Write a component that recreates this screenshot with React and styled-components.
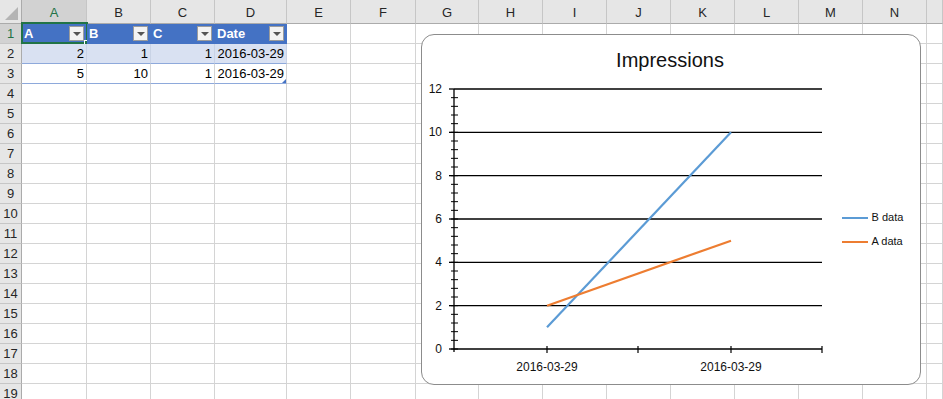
import React from 'react';
import styled, {createGlobalStyle, css} from 'styled-components';

const GlobalStyle = createGlobalStyle`
  html, body {
    margin: 0;
    padding: 0;
    background: #fff;
    overflow: hidden;
  }
  body {
    font-family: "Liberation Sans", Arial, sans-serif;
  }
`;

// last column (O) only peeks in at the right edge, its letter is off screen
const columns = [
  {l: 'A', w: 65}, {l: 'B', w: 64}, {l: 'C', w: 64}, {l: 'D', w: 72},
  {l: 'E', w: 64}, {l: 'F', w: 65}, {l: 'G', w: 63}, {l: 'H', w: 64},
  {l: 'I', w: 64}, {l: 'J', w: 64}, {l: 'K', w: 64}, {l: 'L', w: 64},
  {l: 'M', w: 64}, {l: 'N', w: 64}, {l: '', w: 16},
];

const tableHead = ['A', 'B', 'C', 'Date'];
const tableRows = [
  ['2', '1', '1', '2016-03-29'],
  ['5', '10', '1', '2016-03-29'],
];

const ROWS = 19;

const Sheet = styled.div`
  position: relative;
  width: 943px;
  height: 399px;
  overflow: hidden;
`;

const Grid = styled.div`
  display: grid;
  grid-template-columns: 22px ${columns.map(c => c.w + 'px').join(' ')};
  grid-template-rows: 24px repeat(${ROWS}, 20px);
  font-size: 13px;
  color: #000;
`;

const Corner = styled.div`
  position: relative;
  background: #e6e6e6;
  border-right: 1px solid #ababab;
  border-bottom: 1px solid #ababab;
  box-sizing: border-box;
  &::after {
    content: '';
    position: absolute;
    right: 3px;
    bottom: 3px;
    width: 0;
    height: 0;
    border-left: 13px solid transparent;
    border-bottom: 13px solid #b4b4b4;
  }
`;

const ColHead = styled.div`
  display: flex;
  align-items: center;
  justify-content: center;
  box-sizing: border-box;
  background: ${p => (p.$active ? '#d2d2d2' : '#e6e6e6')};
  color: ${p => (p.$active ? '#217346' : '#262626')};
  border-right: 1px solid #c6c6c6;
  border-bottom: 1px solid #ababab;
  padding-top: 1px;
`;

const RowHead = styled.div`
  display: flex;
  align-items: center;
  justify-content: center;
  box-sizing: border-box;
  background: ${p => (p.$active ? '#d2d2d2' : '#e6e6e6')};
  color: ${p => (p.$active ? '#217346' : '#262626')};
  border-right: 1px solid #ababab;
  border-bottom: 1px solid #c6c6c6;
`;

const Cell = styled.div`
  position: relative;
  display: flex;
  align-items: center;
  justify-content: ${p => (p.$right ? 'flex-end' : 'flex-start')};
  box-sizing: border-box;
  padding: 0 2px;
  white-space: nowrap;
  border-right: 1px solid #d4d4d4;
  border-bottom: 1px solid #d4d4d4;
  background: #fff;
  ${p => p.$kind === 'head' && css`
    background: #4472c4;
    color: #fff;
    font-weight: bold;
    border-right-color: #4472c4;
    border-bottom-color: #4472c4;
  `}
  ${p => p.$kind === 'band' && css`
    background: #d9e1f2;
    border-right-color: #c9d3e6;
    border-bottom-color: #8ea9db;
  `}
  ${p => p.$kind === 'plain' && css`
    border-bottom-color: #8ea9db;
  `}
`;

const Selection = styled.div`
  position: absolute;
  top: -2px;
  left: -1px;
  right: -2px;
  bottom: -1px;
  border: 2px solid #217346;
  pointer-events: none;
  &::after {
    content: '';
    position: absolute;
    right: -5px;
    bottom: -5px;
    width: 5px;
    height: 5px;
    background: #217346;
    border: 1px solid #fff;
  }
`;

const FilterButton = styled.div`
  position: absolute;
  right: 2px;
  top: 2px;
  width: 15px;
  height: 15px;
  box-sizing: border-box;
  background: #f3f3f3;
  border: 1px solid #9c9c9c;
  display: flex;
  align-items: center;
  justify-content: center;
  &::after {
    content: '';
    width: 0;
    height: 0;
    border-left: 4px solid transparent;
    border-right: 4px solid transparent;
    border-top: 4px solid #555;
  }
`;

const ResizeHandle = styled.div`
  position: absolute;
  right: 0;
  bottom: 0;
  width: 0;
  height: 0;
  border-left: 4px solid transparent;
  border-bottom: 4px solid #4472c4;
`;

const Chart = styled.div`
  position: absolute;
  left: 421px;
  top: 34px;
  width: 500px;
  height: 351px;
  box-sizing: border-box;
  background: #fff;
  border: 1.5px solid #8c8c8c;
  border-radius: 13px;
  display: flex;
  flex-direction: column;
`;

const ChartTitle = styled.div`
  text-align: center;
  font-size: 20px;
  line-height: 26px;
  color: #111;
  padding-top: 12px;
  padding-right: 2px;
`;

const ChartBody = styled.div`
  display: flex;
  align-items: flex-start;
  margin-left: -1.5px;
  margin-top: 1px;
`;

const Legend = styled.div`
  display: flex;
  flex-direction: column;
  gap: 9px;
  margin-top: 136px;
  margin-left: 6px;
`;

const LegendItem = styled.div`
  display: flex;
  align-items: center;
  gap: 4px;
  font-size: 11px;
  line-height: 15px;
  color: #111;
`;

const Swatch = styled.span`
  display: inline-block;
  width: 26px;
  height: 2px;
  background: ${p => p.$color};
`;

const BLUE = '#5b9bd5';
const ORANGE = '#ed7d31';

const X0 = 454;
const X1 = 822;
const Y0 = 350;
const UNIT = 260 / 12;
const yOf = v => Y0 - v * UNIT;

function Plot() {
  const majors = [0, 2, 4, 6, 8, 10, 12];
  const minors = [];
  for (let v = 0; v < 12; v += 0.4) minors.push(v);
  const xTicks = [547, 638, 731, 822];

  return (
    <svg width="415" height="305" viewBox="421 75 415 305">
      {majors.map(v => (
        <g key={v}>
          <line x1={X0} x2={X1} y1={yOf(v)} y2={yOf(v)} stroke="#000" strokeWidth="1.3" />
          <line x1={449} x2={X0} y1={yOf(v)} y2={yOf(v)} stroke="#000" strokeWidth="1.3" />
          <text x="442" y={yOf(v) + 4} textAnchor="end" fontSize="12" fill="#111"
            fontFamily="Liberation Sans, Arial, sans-serif">{v}</text>
        </g>
      ))}
      {minors.map(v => (
        <line key={v} x1={451} x2={458} y1={yOf(v)} y2={yOf(v)} stroke="#000" strokeWidth="1" />
      ))}
      <line x1={X0} x2={X0} y1={yOf(12)} y2={Y0 + 3} stroke="#000" strokeWidth="1.3" />
      {xTicks.map(x => (
        <line key={x} x1={x} x2={x} y1={Y0 - 3} y2={Y0 + 4} stroke="#000" strokeWidth="1.2" />
      ))}
      <text x="547" y="372" textAnchor="middle" fontSize="12" fill="#111"
        fontFamily="Liberation Sans, Arial, sans-serif">2016-03-29</text>
      <text x="731" y="372" textAnchor="middle" fontSize="12" fill="#111"
        fontFamily="Liberation Sans, Arial, sans-serif">2016-03-29</text>
      <line x1="547" y1={yOf(1)} x2="731" y2={yOf(10)} stroke={BLUE} strokeWidth="2.2" />
      <line x1="547" y1={yOf(2)} x2="731" y2={yOf(5)} stroke={ORANGE} strokeWidth="2.2" />
    </svg>
  );
}

function cellKind(r, c) {
  if (c > 3) return null;
  if (r === 0) return 'head';
  if (r === 1) return 'band';
  if (r === 2) return 'plain';
  return null;
}

export default function App() {
  const rows = [];
  for (let r = 0; r < ROWS; r++) {
    rows.push(
      <RowHead key={'h' + r} $active={r === 0}>{r + 1}</RowHead>
    );
    columns.forEach((col, c) => {
      const kind = cellKind(r, c);
      let content = null;
      if (kind === 'head') content = tableHead[c];
      else if (kind) content = tableRows[r - 1][c];
      rows.push(
        <Cell key={r + '-' + c} $kind={kind} $right={kind && kind !== 'head'}>
          {content}
          {kind === 'head' && <FilterButton />}
          {r === 0 && c === 0 && <Selection />}
          {r === 2 && c === 3 && <ResizeHandle />}
        </Cell>
      );
    });
  }

  return (
    <>
      <GlobalStyle />
      <Sheet>
        <Grid>
          <Corner />
          {columns.map((col, i) => (
            <ColHead key={i} $active={i === 0}>{col.l}</ColHead>
          ))}
          {rows}
        </Grid>
        <Chart>
          <ChartTitle>Impressions</ChartTitle>
          <ChartBody>
            <Plot />
            <Legend>
              <LegendItem><Swatch $color={BLUE} />B data</LegendItem>
              <LegendItem><Swatch $color={ORANGE} />A data</LegendItem>
            </Legend>
          </ChartBody>
        </Chart>
      </Sheet>
    </>
  );
}
